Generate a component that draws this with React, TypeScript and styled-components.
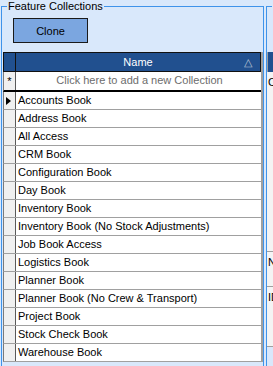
import React, { FC } from 'react'
import styled, { createGlobalStyle } from 'styled-components'

const collections = [
    'Accounts Book',
    'Address Book',
    'All Access',
    'CRM Book',
    'Configuration Book',
    'Day Book',
    'Inventory Book',
    'Inventory Book (No Stock Adjustments)',
    'Job Book Access',
    'Logistics Book',
    'Planner Book',
    'Planner Book (No Crew & Transport)',
    'Project Book',
    'Stock Check Book',
    'Warehouse Book'
]

const GlobalStyle = createGlobalStyle`
    html, body {
        margin: 0;
        padding: 0;
        background: #d9e8fb;
        overflow: hidden;
    }
    body {
        font-family: Tahoma, "Liberation Sans", Arial, sans-serif;
        font-size: 11px;
        color: #000;
    }
`

const Page = styled.div({
    display: 'flex',
    height: '366px',
    overflow: 'hidden',
    paddingLeft: '1px'
})

const Group = styled.fieldset<{ $width: number; $gap?: number }>`
    box-sizing: border-box;
    width: ${p => p.$width}px;
    flex: none;
    margin: 0 0 0 ${p => p.$gap || 0}px;
    padding: 6px 0 0 1px;
    height: 400px;
    border: 1px solid #3f93ea;
    border-bottom: none;
    min-width: 0;
`

const Legend = styled.legend`
    margin-left: 4px;
    padding: 0 1px;
    font-size: 11px;
    line-height: 12px;
    height: 12px;
    color: #000;
`

const Clone = styled.button`
    display: block;
    box-sizing: border-box;
    margin: 0 0 9px 10px;
    width: 75px;
    height: 25px;
    background: #7ba6e0;
    border: 1px solid #1a1a1a;
    font-family: inherit;
    font-size: 11px;
    color: #000;
    padding: 0;
`

const Grid = styled.div({
    width: '260px',
    boxSizing: 'border-box',
    borderRight: '2px solid #a0a0a0',
    background: '#fff'
})

const HeaderRow = styled.div({
    display: 'flex',
    height: '20px',
    boxSizing: 'border-box',
    background: '#21508f',
    border: '1px solid #111',
    borderRight: 'none'
})

const HeaderIndicator = styled.div({
    width: '11px',
    borderRight: '1px solid #111',
    flex: 'none'
})

const HeaderCell = styled.div({
    flex: 1,
    position: 'relative',
    color: '#fff',
    fontSize: '11px',
    lineHeight: '18px',
    textAlign: 'center',
    borderRight: '1px solid #111'
})

const SortGlyph = styled.span({
    position: 'absolute',
    right: '8px',
    top: '0',
    color: '#b9c4d4',
    fontSize: '11px'
})

const Row = styled.div<{ $height: number; $line: string }>`
    display: flex;
    height: ${p => p.$height}px;
    box-sizing: border-box;
    border-bottom: ${p => p.$line};
    border-left: 1px solid #7a7a7a;
`

const Indicator = styled.div({
    width: '11px',
    flex: 'none',
    background: '#f0f0f0',
    borderRight: '1px solid #5a5a5a',
    display: 'flex',
    alignItems: 'center',
    justifyContent: 'center',
    fontSize: '11px'
})

const Arrow = styled.span({
    width: 0,
    height: 0,
    borderTop: '4px solid transparent',
    borderBottom: '4px solid transparent',
    borderLeft: '5px solid #000',
    marginLeft: '-2px'
})

const Cell = styled.div<{ $muted?: boolean }>`
    flex: 1;
    padding-left: 2px;
    font-size: 11px;
    line-height: 17px;
    white-space: nowrap;
    overflow: hidden;
    color: ${p => (p.$muted ? '#6d6d6d' : '#000')};
    text-align: ${p => (p.$muted ? 'center' : 'left')};
`

const Spacer = styled.div({
    height: '34px'
})

const SidePanel = styled.div({
    marginLeft: '-1px',
    background: '#f4f4f4'
})

const SideHeader = styled.div({
    height: '20px',
    background: '#21508f',
    borderLeft: '1px solid #a0a0a0'
})

const SideRow = styled.div<{ $height: number }>`
    height: ${p => p.$height}px;
    box-sizing: border-box;
    border-bottom: 1px solid #a0a0a0;
    padding: 3px 0 0 1px;
    font-size: 11px;
    line-height: 14px;
    white-space: nowrap;
    overflow: hidden;
`

const App: FC = () => {
    return (
        <>
            <GlobalStyle />
            <Page>
                <Group $width={263}>
                    <Legend>Feature Collections</Legend>
                    <Clone>Clone</Clone>
                    <Grid>
                        <HeaderRow>
                            <HeaderIndicator />
                            <HeaderCell>
                                Name
                                <SortGlyph>△</SortGlyph>
                            </HeaderCell>
                        </HeaderRow>
                        <Row $height={20} $line='2px solid #000'>
                            <Indicator>*</Indicator>
                            <Cell $muted>Click here to add a new Collection</Cell>
                        </Row>
                        {collections.map((name, i) => (
                            <Row key={name} $height={18} $line='1px solid #a0a0a0'>
                                <Indicator>{i === 0 && <Arrow />}</Indicator>
                                <Cell>{name}</Cell>
                            </Row>
                        ))}
                    </Grid>
                </Group>
                <Group $width={20} $gap={2}>
                    <Legend />
                    <Spacer />
                    <SidePanel>
                        <SideHeader />
                        <SideRow $height={180}>Collection</SideRow>
                        <SideRow $height={35}>Name</SideRow>
                        <SideRow $height={60}>ID</SideRow>
                    </SidePanel>
                </Group>
            </Page>
        </>
    )
}

export default App
